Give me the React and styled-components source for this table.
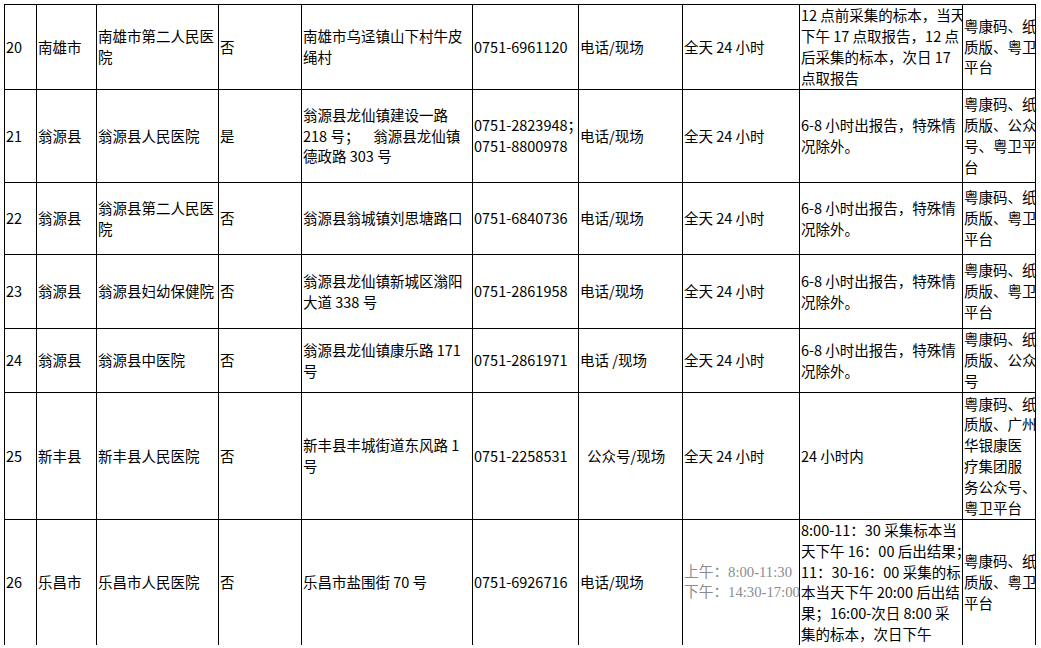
import React from 'react';
import styled, { createGlobalStyle } from 'styled-components';

const COLS = [31, 59, 121, 82, 170, 105, 103, 116, 162, 72];

const GlobalStyle = createGlobalStyle`
  html, body {
    margin: 0;
    padding: 0;
    background: #ffffff;
  }
  body {
    font-family: "Noto Sans CJK SC", sans-serif;
    color: #000000;
  }
`;

const Page = styled.div`
  padding: 4px 0 0 4px;
`;

const Table = styled.div`
  display: inline-flex;
  flex-direction: column;
  gap: 1px;
  padding: 1px;
  background: #000000;
`;

const Row = styled.div`
  display: grid;
  grid-template-columns: ${COLS.map((w) => `${w}px`).join(' ')};
  gap: 1px;
  height: ${(props) => props.$h}px;
`;

const Cell = styled.div`
  display: flex;
  align-items: center;
  padding-left: ${(props) => props.$indent || 1}px;
  background: #ffffff;
  white-space: pre;
  font-size: 14.5px;
  line-height: 20.8px;
  color: #000000;
`;

// opening hours in row 26 are set in a grey serif face in the source sheet
const Muted = styled.span`
  font-family: "Liberation Serif", "Noto Sans CJK SC", serif;
  color: #8c8c8c;
  font-size: 14.7px;
  line-height: 20.8px;
`;

const rows = [
  {
    h: 84,
    cells: [
      '20',
      '南雄市',
      '南雄市第二人民医\n院',
      '否',
      '南雄市乌迳镇山下村牛皮\n绳村',
      '0751-6961120',
      '电话/现场',
      '全天 24 小时',
      '12 点前采集的标本，当天\n下午 17 点取报告，12 点\n后采集的标本，次日 17\n点取报告',
      '粤康码、纸\n质版、粤卫\n平台',
    ],
  },
  {
    h: 92,
    cells: [
      '21',
      '翁源县',
      '翁源县人民医院',
      '是',
      '翁源县龙仙镇建设一路\n218 号；\u3000  翁源县龙仙镇\n德政路 303 号',
      '0751-2823948；\n0751-8800978',
      '电话/现场',
      '全天 24 小时',
      '6-8 小时出报告，特殊情\n况除外。',
      '粤康码、纸\n质版、公众\n号、粤卫平\n台',
    ],
  },
  {
    h: 71,
    cells: [
      '22',
      '翁源县',
      '翁源县第二人民医\n院',
      '否',
      '翁源县翁城镇刘思塘路口',
      '0751-6840736',
      '电话/现场',
      '全天 24 小时',
      '6-8 小时出报告，特殊情\n况除外。',
      '粤康码、纸\n质版、粤卫\n平台',
    ],
  },
  {
    h: 73,
    cells: [
      '23',
      '翁源县',
      '翁源县妇幼保健院',
      '否',
      '翁源县龙仙镇新城区滃阳\n大道 338 号',
      '0751-2861958',
      '电话/现场',
      '全天 24 小时',
      '6-8 小时出报告，特殊情\n况除外。',
      '粤康码、纸\n质版、粤卫\n平台',
    ],
  },
  {
    h: 63,
    cells: [
      '24',
      '翁源县',
      '翁源县中医院',
      '否',
      '翁源县龙仙镇康乐路 171\n号',
      '0751-2861971',
      '电话 /现场',
      '全天 24 小时',
      '6-8 小时出报告，特殊情\n况除外。',
      '粤康码、纸\n质版、公众\n号',
    ],
  },
  {
    h: 126,
    indent: { 6: 8 },
    cells: [
      '25',
      '新丰县',
      '新丰县人民医院',
      '否',
      '新丰县丰城街道东风路 1\n号',
      '0751-2258531',
      '公众号/现场',
      '全天 24 小时',
      '24 小时内',
      '粤康码、纸\n质版、广州\n华银康医\n疗集团服\n务公众号、\n粤卫平台',
    ],
  },
  {
    h: 124,
    cells: [
      '26',
      '乐昌市',
      '乐昌市人民医院',
      '否',
      '乐昌市盐围街 70 号',
      '0751-6926716',
      '电话/现场',
      { muted: '上午：8:00-11:30\n下午：14:30-17:00' },
      '8:00-11：30 采集标本当\n天下午 16：00 后出结果；\n11：30-16：00 采集的标\n本当天下午 20:00 后出结\n果；16:00-次日 8:00 采\n集的标本，次日下午',
      '粤康码、纸\n质版、粤卫\n平台',
    ],
  },
];

const App = () => {
  return (
    <Page>
      <GlobalStyle />
      <Table>
        {rows.map((row) => (
          <Row key={row.cells[0]} $h={row.h}>
            {row.cells.map((cell, i) => (
              <Cell key={i} $indent={row.indent && row.indent[i]}>
                {typeof cell === 'string' ? cell : <Muted>{cell.muted}</Muted>}
              </Cell>
            ))}
          </Row>
        ))}
      </Table>
    </Page>
  );
};

export default App;
